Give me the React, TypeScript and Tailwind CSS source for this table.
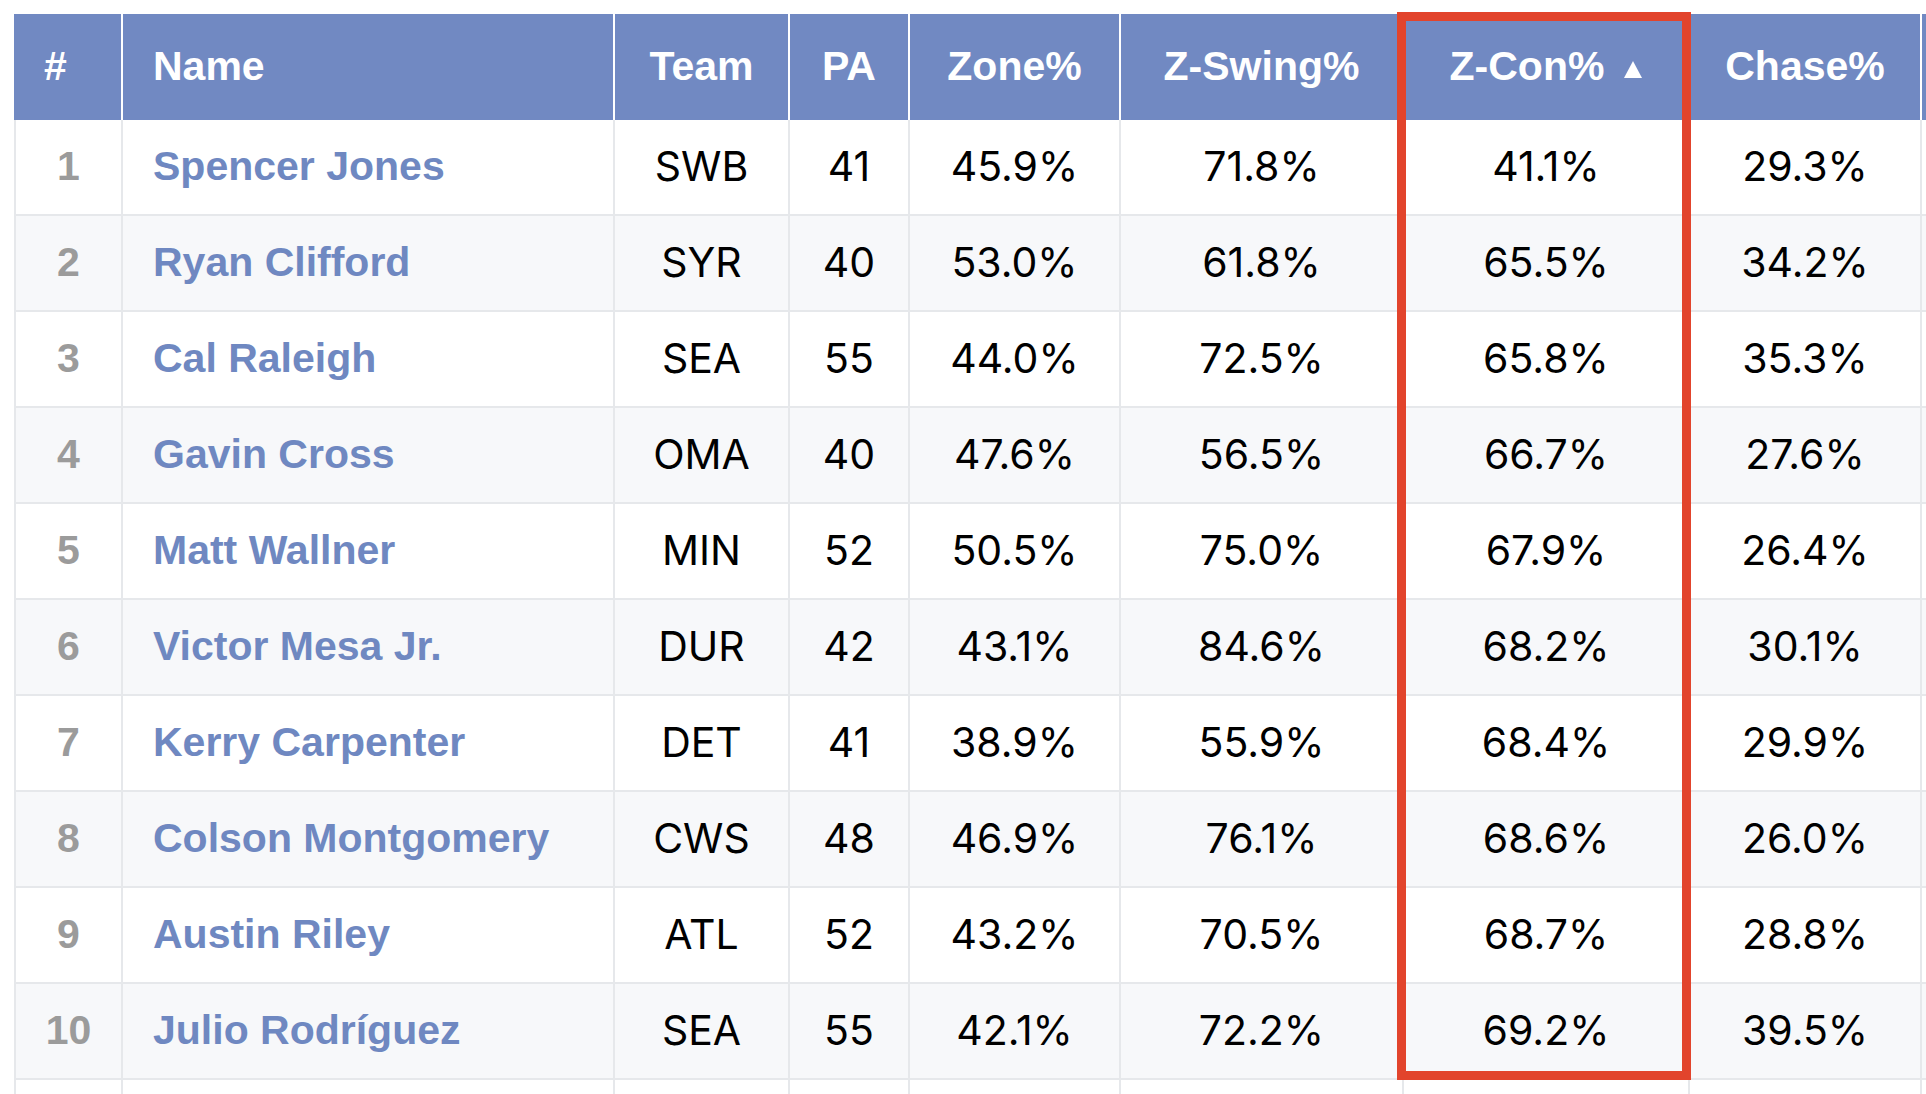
type Row = {
  name: string;
  team: string;
  pa: number;
  zone: string;
  zSwing: string;
  zCon: string;
  chase: string;
};

const rows: Row[] = [
  { name: "Spencer Jones", team: "SWB", pa: 41, zone: "45.9%", zSwing: "71.8%", zCon: "41.1%", chase: "29.3%" },
  { name: "Ryan Clifford", team: "SYR", pa: 40, zone: "53.0%", zSwing: "61.8%", zCon: "65.5%", chase: "34.2%" },
  { name: "Cal Raleigh", team: "SEA", pa: 55, zone: "44.0%", zSwing: "72.5%", zCon: "65.8%", chase: "35.3%" },
  { name: "Gavin Cross", team: "OMA", pa: 40, zone: "47.6%", zSwing: "56.5%", zCon: "66.7%", chase: "27.6%" },
  { name: "Matt Wallner", team: "MIN", pa: 52, zone: "50.5%", zSwing: "75.0%", zCon: "67.9%", chase: "26.4%" },
  { name: "Victor Mesa Jr.", team: "DUR", pa: 42, zone: "43.1%", zSwing: "84.6%", zCon: "68.2%", chase: "30.1%" },
  { name: "Kerry Carpenter", team: "DET", pa: 41, zone: "38.9%", zSwing: "55.9%", zCon: "68.4%", chase: "29.9%" },
  { name: "Colson Montgomery", team: "CWS", pa: 48, zone: "46.9%", zSwing: "76.1%", zCon: "68.6%", chase: "26.0%" },
  { name: "Austin Riley", team: "ATL", pa: 52, zone: "43.2%", zSwing: "70.5%", zCon: "68.7%", chase: "28.8%" },
  { name: "Julio Rodríguez", team: "SEA", pa: 55, zone: "42.1%", zSwing: "72.2%", zCon: "69.2%", chase: "39.5%" },
];

const th =
  "h-[106px] bg-[#7189c2] text-white font-bold text-[41px] text-center border-r-2 border-white";
const td = "h-[96px] border-r-2 border-b-2 border-[#e6e8eb] text-center";
const num = " font-['Inter',sans-serif]";

export default function App() {
  return (
    <div className="h-screen w-full overflow-hidden bg-white pl-[14px] pt-[14px] font-['Liberation_Sans',Arial,sans-serif]">
      <div className="relative w-[2108px]">
        <table className="table-fixed border-separate border-spacing-0 w-[2108px]">
          <colgroup>
            <col className="w-[109px]" />
            <col className="w-[492px]" />
            <col className="w-[175px]" />
            <col className="w-[120px]" />
            <col className="w-[211px]" />
            <col className="w-[283px]" />
            <col className="w-[286px]" />
            <col className="w-[232px]" />
            <col className="w-[200px]" />
          </colgroup>
          <thead>
            <tr>
              <th className={th + " text-left pl-[28px] border-l-2 border-l-[#7189c2]"}>#</th>
              <th className={th + " text-left pl-[30px]"}>Name</th>
              <th className={th}>Team</th>
              <th className={th}>PA</th>
              <th className={th}>Zone%</th>
              <th className={th}>Z-Swing%</th>
              <th className={th}>
                <span>Z-Con%</span>
                <svg
                  width="18"
                  height="17"
                  viewBox="0 0 18 17"
                  className="inline-block ml-[20px] align-[2px]"
                >
                  <path d="M9 0 L18 17 L0 17 Z" fill="white" />
                </svg>
              </th>
              <th className={th}>Chase%</th>
              <th className={th}></th>
            </tr>
          </thead>
          <tbody className="text-[41px] text-black">
            {rows.map((r, i) => (
              <tr key={r.name} className={i % 2 === 1 ? "bg-[#f7f8fa]" : "bg-white"}>
                <td className={td + " border-l-2 font-bold text-[#9b9b9b]"}>{i + 1}</td>
                <td className={td + " text-left pl-[30px] font-bold text-[#6f88c1]"}>{r.name}</td>
                <td className={td + num}>{r.team}</td>
                <td className={td + num}>{r.pa}</td>
                <td className={td + num}>{r.zone}</td>
                <td className={td + num}>{r.zSwing}</td>
                <td className={td + num}>{r.zCon}</td>
                <td className={td + num}>{r.chase}</td>
                <td className={td}></td>
              </tr>
            ))}
            <tr className="bg-white">
              <td className={td + " border-l-2"}></td>
              <td className={td}></td>
              <td className={td}></td>
              <td className={td}></td>
              <td className={td}></td>
              <td className={td}></td>
              <td className={td}></td>
              <td className={td}></td>
              <td className={td}></td>
            </tr>
          </tbody>
        </table>
        {/* highlight around the sorted column */}
        <div className="absolute left-[1383px] top-[-2px] w-[294px] h-[1068px] border-[9px] border-[#e2442c] pointer-events-none" />
      </div>
    </div>
  );
}
